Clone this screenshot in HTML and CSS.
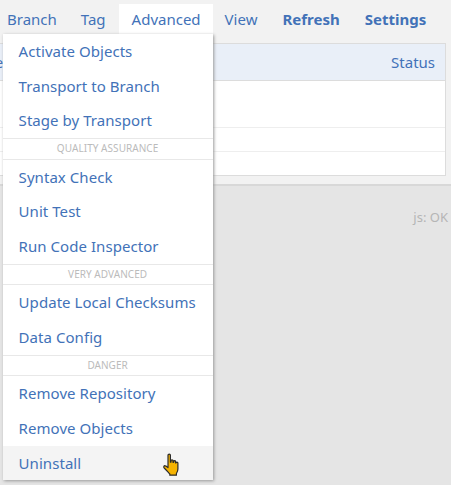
FILE: index.html
```html
<!DOCTYPE html>
<html lang="en">
<head>
  <meta charset="UTF-8">
  <title>abapGit</title>
  <link rel="stylesheet" href="styles.css">
</head>
<body>

  <div class="top-area">
    <div class="nav-bar">
      <a class="nav-item">Branch</a>
      <a class="nav-item">Tag</a>
      <div class="nav-item nav-open">
        Advanced
        <div class="dropdown">
          <a class="menu-item">Activate Objects</a>
          <a class="menu-item">Transport to Branch</a>
          <a class="menu-item">Stage by Transport</a>
          <div class="menu-sep">QUALITY ASSURANCE</div>
          <a class="menu-item">Syntax Check</a>
          <a class="menu-item">Unit Test</a>
          <a class="menu-item">Run Code Inspector</a>
          <div class="menu-sep">VERY ADVANCED</div>
          <a class="menu-item">Update Local Checksums</a>
          <a class="menu-item">Data Config</a>
          <div class="menu-sep">DANGER</div>
          <a class="menu-item">Remove Repository</a>
          <a class="menu-item">Remove Objects</a>
          <a class="menu-item menu-hover">Uninstall
            <svg class="hand" width="18" height="24" viewBox="0 0 18 24">
              <path d="M6 2.2c0-1.500 2.400-1.500 2.400 0v7l.6-.1V7.700c0-1.200 2-1.200 2 0v1.600l.5.100V8.400c0-1.100 2-1.100 2 0v1.400l.5.100c0-1 1.900-.9 1.900.2v5.900c0 2-.6 3.200-1.500 4.500v1.700H7.800v-1.300c-1.200-1.200-3.300-3.700-5.600-5.900-1-1-.2-2.600 1.200-2.200.9.200 1.700 1 2.600 1.800z" fill="#f5b301" stroke="#2b2b2b" stroke-width="1.200" stroke-linejoin="round"/>
            </svg>
          </a>
        </div>
      </div>
      <a class="nav-item nav-wide">View</a>
      <a class="nav-item nav-bold nav-wide">Refresh</a>
      <a class="nav-item nav-bold">Settings</a>
    </div>

    <div class="repo-table">
      <div class="table-head">
        <span class="col-name">Name</span>
        <span>Status</span>
      </div>
      <div class="table-row row-tall"></div>
      <div class="table-row"></div>
      <div class="table-row row-last"></div>
    </div>
  </div>

  <div class="bottom-area">
    <span class="js-status">js: OK</span>
  </div>

</body>
</html>
```

FILE: styles.css
```css
html, body {
  height: 100%;
}

body {
  margin: 0;
  background-color: #e5e5e5;
  font-family: "Noto Sans", "Open Sans", sans-serif;
  font-size: 15px;
  color: #4272b8;
  overflow: hidden;
}

.top-area {
  background-color: #f2f2f2;
  height: 186px;
  padding-top: 4px;
  box-sizing: border-box;
  border-bottom: 2px solid #d8d8d8;
}

.nav-bar {
  display: flex;
  height: 30px;
  align-items: stretch;
  padding-left: 7px;
}

.nav-item {
  display: block;
  line-height: 30px;
  margin-right: 24px;
  white-space: nowrap;
}

.nav-wide {
  margin-right: 25px;
}

.nav-bold {
  font-weight: 700;
}

.nav-open {
  position: relative;
  background-color: #fff;
  margin-left: -11px;
  margin-right: 12px;
  padding: 0 12px 0 13px;
}

.dropdown {
  position: absolute;
  top: 30px;
  right: 0;
  width: 210px;
  background-color: #fff;
  box-shadow: 1px 1px 3px #999;
  z-index: 10;
  letter-spacing: 0.05px;
}

.menu-item {
  display: block;
  position: relative;
  height: 34.67px;
  line-height: 34.67px;
  padding-left: 16px;
}

.menu-hover {
  background-color: #f4f4f4;
}

.hand {
  position: absolute;
  left: 159px;
  top: 7px;
}

.menu-sep {
  height: 19.67px;
  line-height: 19.67px;
  border-top: 1px solid #e8e8e8;
  border-bottom: 1px solid #e8e8e8;
  font-size: 10px;
  color: #bbb;
  text-align: center;
}

.repo-table {
  margin: 9px 5px 0 0;
  background-color: #fff;
  border: 1px solid #dcdcdc;
  border-left: 0;
}

.table-head {
  display: flex;
  justify-content: space-between;
  height: 36px;
  line-height: 36px;
  background-color: #e9eff8;
  border-bottom: 1px solid #dcdcdc;
  padding-right: 10px;
  overflow: hidden;
}

.col-name {
  margin-left: -39px;
}

.table-row {
  height: 23px;
  border-bottom: 1px solid #eee;
}

.row-tall {
  height: 46px;
}

.row-last {
  border-bottom: 0;
}

.bottom-area {
  padding-top: 20px;
  text-align: right;
  padding-right: 3px;
}

.js-status {
  font-size: 13px;
  color: #b5b5b5;
}
```
